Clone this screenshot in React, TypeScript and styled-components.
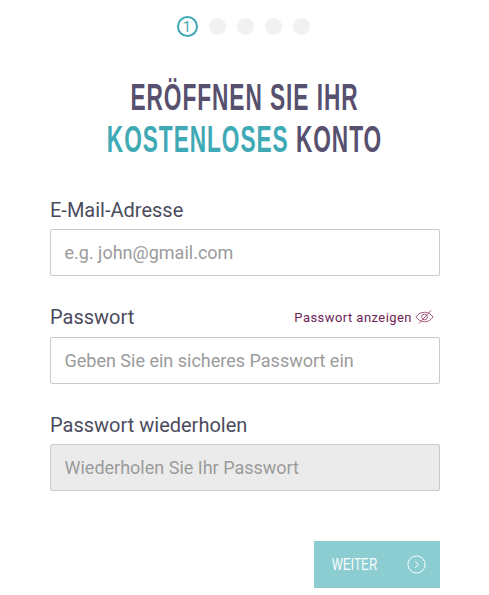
import React from "react";
import styled, { createGlobalStyle } from "styled-components";

const GlobalStyle = createGlobalStyle`
  html, body {
    margin: 0;
    padding: 0;
    background: #fff;
    font-family: Roboto, "Liberation Sans", sans-serif;
  }
  * { box-sizing: border-box; }
`;

const Page = styled.div`
  width: 489px;
  height: 595px;
  padding: 16px 49px 0 50px;
  overflow: hidden;
`;

const Steps = styled.div`
  display: flex;
  justify-content: center;
  align-items: center;
  gap: 11px;
  height: 21px;
  margin-right: 4px;
`;

const Step = styled.div<{ $active?: boolean }>`
  width: ${(p) => (p.$active ? "21px" : "17px")};
  height: ${(p) => (p.$active ? "21px" : "17px")};
  border-radius: 50%;
  background: ${(p) => (p.$active ? "#fff" : "#f1f1f1")};
  border: ${(p) => (p.$active ? "2px solid #3fa9b5" : "none")};
  color: #3fa9b5;
  font-size: 14px;
  display: flex;
  align-items: center;
  justify-content: center;
`;

const Title = styled.h1`
  margin: 40px -49px 0 -50px;
  font-family: "Liberation Sans", sans-serif;
  font-weight: 700;
  font-size: 36px;
  line-height: 42px;
  text-align: center;
  white-space: nowrap;
  color: #57506f;
  text-transform: uppercase;
  transform: scaleX(0.63);
  letter-spacing: 1.5px;
`;

const Accent = styled.span`
  color: #3fa9b5;
`;

const Form = styled.form`
  margin-top: 36px;
  display: flex;
  flex-direction: column;
`;

const Field = styled.div`
  margin-bottom: 28px;
`;

const LabelRow = styled.div<{ $tall?: boolean }>`
  display: flex;
  align-items: center;
  justify-content: space-between;
  height: 26px;
  margin-bottom: ${(p) => (p.$tall ? "7px" : "6px")};
`;

const Label = styled.label`
  font-size: 20px;
  color: #4b4b5e;
`;

const ShowPassword = styled.button`
  display: flex;
  align-items: center;
  gap: 3px;
  padding: 0 6px 0 0;
  border: none;
  background: none;
  font-family: Roboto, sans-serif;
  font-size: 13px;
  letter-spacing: 0.45px;
  color: #6f1d54;
`;

const Input = styled.input`
  width: 100%;
  height: 47px;
  padding: 0 13.5px;
  border: 1px solid #c9c9d0;
  border-radius: 2px;
  font-family: Roboto, sans-serif;
  font-size: 18px;
  color: #333;
  background: ${(p) => (p.disabled ? "#ebebeb" : "#fff")};

  &::placeholder {
    color: #9b9b9b;
    opacity: 1;
  }
`;

const Footer = styled.div`
  display: flex;
  justify-content: flex-end;
  margin-top: 22px;
`;

const NextButton = styled.button`
  width: 126px;
  height: 47px;
  padding: 0 14px 0 18px;
  border: none;
  background: #8ccdd2;
  color: #fff;
  display: flex;
  align-items: center;
  justify-content: space-between;
  font-family: "Liberation Sans", sans-serif;
  font-size: 17px;
`;

const NextText = styled.span`
  display: inline-block;
  transform: scaleX(0.66);
  transform-origin: left center;
  letter-spacing: 0.5px;
`;

const EyeIcon = () => (
  <svg width="19" height="16" viewBox="0 0 20 16" fill="none" stroke="#a5557f" strokeWidth="1">
    <path d="M1 8c2.500-3.400 5.500-5 9-5s6.500 1.600 9 5c-2.500 3.400-5.500 5-9 5s-6.500-1.600-9-5z" />
    <circle cx="10" cy="8" r="3" />
    <path d="M4 15L17 1" />
  </svg>
);

const ArrowIcon = () => (
  <svg width="19" height="19" viewBox="0 0 20 20" fill="none" stroke="#fff" strokeWidth="1">
    <circle cx="10" cy="10" r="9" />
    <path d="M8.500 6.500L12 10l-3.500 3.500" />
  </svg>
);

export default function App() {
  return (
    <>
      <GlobalStyle />
      <Page>
        <Steps>
          <Step $active>1</Step>
          <Step />
          <Step />
          <Step />
          <Step />
        </Steps>
        <Title>
          Eröffnen Sie Ihr
          <br />
          <Accent>kostenloses</Accent> Konto
        </Title>
        <Form>
          <Field>
            <LabelRow>
              <Label>E-Mail-Adresse</Label>
            </LabelRow>
            <Input placeholder="e.g. john@gmail.com" />
          </Field>
          <Field>
            <LabelRow $tall>
              <Label>Passwort</Label>
              <ShowPassword type="button">
                Passwort anzeigen <EyeIcon />
              </ShowPassword>
            </LabelRow>
            <Input placeholder="Geben Sie ein sicheres Passwort ein" />
          </Field>
          <Field>
            <LabelRow>
              <Label>Passwort wiederholen</Label>
            </LabelRow>
            <Input disabled placeholder="Wiederholen Sie Ihr Passwort" />
          </Field>
          <Footer>
            <NextButton type="button">
              <NextText>WEITER</NextText>
              <ArrowIcon />
            </NextButton>
          </Footer>
        </Form>
      </Page>
    </>
  );
}
